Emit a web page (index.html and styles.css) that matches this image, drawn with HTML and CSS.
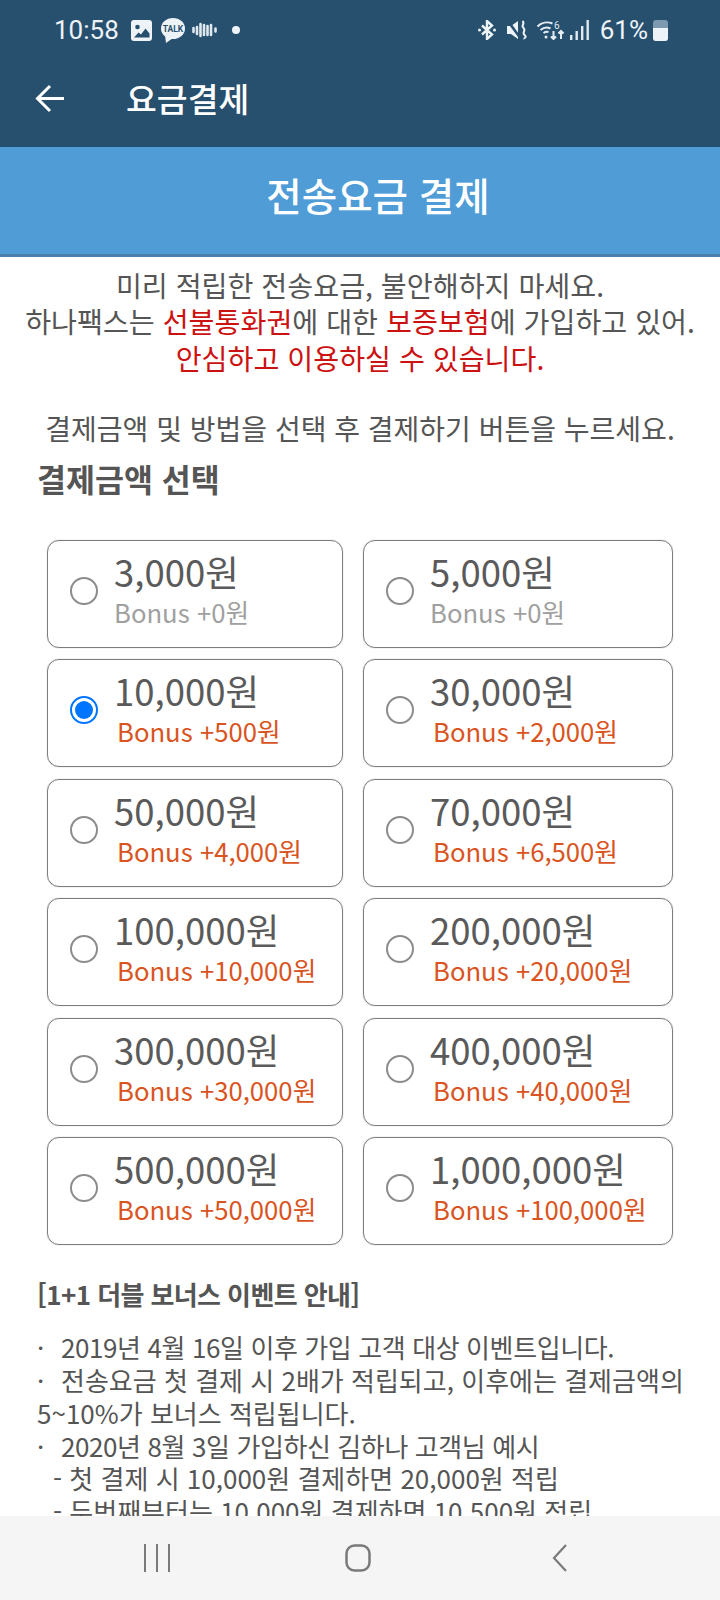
FILE: index.html
```html
<!DOCTYPE html>
<html lang="ko">
<head>
    <meta charset="UTF-8">
    <meta name="viewport" content="width=device-width, initial-scale=1.0">
    <title>요금결제</title>
    <link rel="stylesheet" href="styles.css">
</head>
<body>
    <div class="screen">
        <div class="app-bar">
            <div class="status-bar">
                <div class="status-left">
                    <span class="clock">10:58</span>
                    <svg class="ic-photo" width="21" height="21" viewBox="0 0 21 21"><rect width="21" height="21" rx="3" fill="#eef3f7"/><circle cx="6.500" cy="7" r="2.300" fill="#27506f"/><path d="M3 17.500l4.500-5 2.500 2 4.500-6 4 5v4z" fill="#27506f"/></svg>
                    <svg class="ic-talk" width="24" height="25" viewBox="0 0 24 25"><ellipse cx="12" cy="10.500" rx="12" ry="10.500" fill="#eef3f7"/><path d="M4 17l1 8 7-5z" fill="#eef3f7"/><text x="12" y="14" text-anchor="middle" class="talk-text">TALK</text></svg>
                    <svg class="ic-wave" width="25" height="16" viewBox="0 0 25 16"><g stroke="#dfe8ee" stroke-width="2.600" stroke-linecap="round"><path d="M1.500 6v4M5 5v7M8.500 2v12M12 3v10M15.500 4v9M19 3v10M23.500 6.500v3"/></g></svg>
                    <span class="dot"></span>
                </div>
                <div class="status-right">
                    <svg class="ic-bt" width="18" height="20" viewBox="0 0 18 20" fill="none" stroke="#eef3f7" stroke-width="2.400"><path d="M4 5.500l10 9-5 4.500V1l5 4.500-10 9"/><circle cx="1.500" cy="10" r="1.500" fill="#eef3f7" stroke="none"/><circle cx="16.500" cy="10" r="1.500" fill="#eef3f7" stroke="none"/></svg>
                    <svg class="ic-mute" width="20" height="20" viewBox="0 0 20 20"><path d="M0 6h4l7-5v18l-7-5H0z" fill="#eef3f7"/><path d="M1 1l13 18" stroke="#27506f" stroke-width="2.500"/><path d="M15.500 1c3 3-2 4.500 1 7s-2 4.500 1 7-1 3 0 4" stroke="#eef3f7" stroke-width="2" fill="none"/></svg>
                    <svg class="ic-wifi" width="27" height="20" viewBox="0 0 27 20" fill="none" stroke="#e6edf2" stroke-width="2"><path d="M0.500 6.500c4-4 10-5 15-3M3.500 10c3-2.500 7-3 10-1.500M6.500 13c1.500-1 3-1.500 5-1"/><circle cx="9" cy="17" r="1.500" fill="#e6edf2" stroke="none"/><path d="M16.500 11v8M14 16.500l2.500 2.500 2.500-2.500M24 19v-8M21.500 13.500l2.500-2.500 2.500 2.500"/><text x="17" y="9" class="wifi-six">6</text></svg>
                    <svg class="ic-signal" width="19" height="20" viewBox="0 0 19 20" fill="#dfe8ee"><rect x="0" y="15" width="2.400" height="5"/><rect x="5.500" y="11" width="2.400" height="9"/><rect x="11" y="6" width="2.400" height="14"/><rect x="16.500" y="0" width="2.400" height="20"/></svg>
                    <span class="percent">61%</span>
                    <span class="battery"><span class="battery-fill"></span></span>
                </div>
            </div>
            <div class="toolbar">
                <svg class="back" width="29" height="29" viewBox="0 0 29 29" fill="none" stroke="#fff" stroke-width="3"><path d="M29 14.500H3M15 2L2.500 14.500 15 27"/></svg>
                <h1 class="toolbar-title">요금결제</h1>
            </div>
        </div>

        <div class="banner">전송요금 결제</div>

        <div class="content">
            <div class="notice">
                <p>미리 적립한 전송요금, 불안해하지 마세요.</p>
                <p>하나팩스는 <em>선불통화권</em>에 대한 <em>보증보험</em>에 가입하고 있어.</p>
                <p><em>안심하고 이용하실 수 있습니다.</em></p>
            </div>
            <p class="guide">결제금액 및 방법을 선택 후 결제하기 버튼을 누르세요.</p>
            <h2 class="section-title">결제금액 선택</h2>

            <div class="price-grid">
                <label class="price-card">
                    <span class="radio"></span>
                    <span class="price-text"><span class="amount">3,000원</span><span class="bonus none">Bonus +0원</span></span>
                </label>
                <label class="price-card">
                    <span class="radio"></span>
                    <span class="price-text"><span class="amount">5,000원</span><span class="bonus none">Bonus +0원</span></span>
                </label>
                <label class="price-card">
                    <span class="radio checked"></span>
                    <span class="price-text"><span class="amount">10,000원</span><span class="bonus">Bonus +500원</span></span>
                </label>
                <label class="price-card">
                    <span class="radio"></span>
                    <span class="price-text"><span class="amount">30,000원</span><span class="bonus">Bonus +2,000원</span></span>
                </label>
                <label class="price-card">
                    <span class="radio"></span>
                    <span class="price-text"><span class="amount">50,000원</span><span class="bonus">Bonus +4,000원</span></span>
                </label>
                <label class="price-card">
                    <span class="radio"></span>
                    <span class="price-text"><span class="amount">70,000원</span><span class="bonus">Bonus +6,500원</span></span>
                </label>
                <label class="price-card">
                    <span class="radio"></span>
                    <span class="price-text"><span class="amount">100,000원</span><span class="bonus">Bonus +10,000원</span></span>
                </label>
                <label class="price-card">
                    <span class="radio"></span>
                    <span class="price-text"><span class="amount">200,000원</span><span class="bonus">Bonus +20,000원</span></span>
                </label>
                <label class="price-card">
                    <span class="radio"></span>
                    <span class="price-text"><span class="amount">300,000원</span><span class="bonus">Bonus +30,000원</span></span>
                </label>
                <label class="price-card">
                    <span class="radio"></span>
                    <span class="price-text"><span class="amount">400,000원</span><span class="bonus">Bonus +40,000원</span></span>
                </label>
                <label class="price-card">
                    <span class="radio"></span>
                    <span class="price-text"><span class="amount">500,000원</span><span class="bonus">Bonus +50,000원</span></span>
                </label>
                <label class="price-card">
                    <span class="radio"></span>
                    <span class="price-text"><span class="amount">1,000,000원</span><span class="bonus">Bonus +100,000원</span></span>
                </label>
            </div>

            <h3 class="event-title">[1+1 더블 보너스 이벤트 안내]</h3>
            <div class="event-list">
                <p class="tight"><span class="mark">·</span>2019년 4월 16일 이후 가입 고객 대상 이벤트입니다.</p>
                <p><span class="mark">·</span>전송요금 첫 결제 시 2배가 적립되고, 이후에는 결제금액의<br>5~10%가 보너스 적립됩니다.</p>
                <p class="tight"><span class="mark">·</span>2020년 8월 3일 가입하신 김하나 고객님 예시</p>
                <p class="sub">- 첫 결제 시 10,000원 결제하면 20,000원 적립</p>
                <p class="sub">- 두번째부터는 10,000원 결제하면 10,500원 적립</p>
            </div>
        </div>

        <div class="nav-bar">
            <svg width="26" height="28" viewBox="0 0 26 28" fill="none" stroke="#7a7a7a" stroke-width="2"><path d="M1 0v28M13 0v28M25 0v28"/></svg>
            <svg width="26" height="28" viewBox="0 0 26 28" fill="none" stroke="#7a7a7a" stroke-width="2.500"><rect x="1.500" y="1.500" width="23" height="25" rx="8"/></svg>
            <svg class="nav-back" width="15" height="28" viewBox="0 0 15 28" fill="none" stroke="#7a7a7a" stroke-width="2.200"><path d="M14 1L2 14l12 13"/></svg>
        </div>
    </div>
</body>
</html>
```

FILE: styles.css
```css
* {
    box-sizing: border-box;
}

body {
    margin: 0;
    font-family: "Noto Sans CJK KR", "Noto Sans", sans-serif;
    background-color: #fff;
    color: #555;
}

p, h1, h2, h3 {
    margin: 0;
}

.screen {
    width: 720px;
    height: 1600px;
    display: flex;
    flex-direction: column;
    overflow: hidden;
}

.app-bar {
    height: 147px;
    background-color: #27506f;
    color: #fff;
    flex-shrink: 0;
}

.status-bar {
    height: 60px;
    padding: 0 52px 0 54px;
    display: flex;
    justify-content: space-between;
    align-items: center;
}

.status-left, .status-right {
    display: flex;
    align-items: center;
}

.clock, .percent {
    font-family: Roboto, sans-serif;
    font-size: 26px;
    color: #eef3f7;
}

.ic-photo { margin-left: 12px; }
.ic-talk { margin-left: 9px; }
.ic-wave { margin-left: 7px; }

.ic-mute { margin-left: 11px; }
.ic-wifi { margin-left: 10px; }
.ic-signal { margin-left: 6px; }

.percent {
    margin: 0 5px 0 11px;
}

.talk-text {
    font-family: Roboto, sans-serif;
    font-size: 8.500px;
    font-weight: 700;
    fill: #27506f;
}

.wifi-six {
    font-family: Roboto, sans-serif;
    font-size: 10px;
    fill: #dfe8ee;
    stroke: none;
}

.dot {
    width: 8px;
    height: 8px;
    border-radius: 50%;
    background-color: #eef3f7;
    margin-left: 15px;
}

.battery {
    width: 15px;
    height: 21px;
    border-radius: 3px;
    background-color: #7d9ab0;
    display: flex;
    align-items: flex-end;
    overflow: hidden;
}

.battery-fill {
    width: 100%;
    height: 13px;
    background-color: #eef3f7;
}

.toolbar {
    height: 76px;
    display: flex;
    align-items: center;
    padding-left: 35px;
}

.toolbar-title {
    margin-left: 62px;
    font-size: 33.500px;
    font-weight: 500;
    line-height: 1;
}

.banner {
    height: 110px;
    flex-shrink: 0;
    background-color: #4f9cd7;
    border-bottom: 3px solid #4a80ab;
    color: #fff;
    font-size: 38.500px;
    font-weight: 500;
    display: flex;
    align-items: center;
    justify-content: center;
    padding: 0 0 14px 36px;
}

.content {
    flex: 1;
    min-height: 0;
    overflow: hidden;
}

.notice {
    padding-top: 10px;
    text-align: center;
    font-size: 28.200px;
    line-height: 36.300px;
}

.notice em {
    font-style: normal;
    color: #cc1111;
}

.guide {
    margin-top: 34px;
    text-align: center;
    font-size: 28px;
    line-height: 36px;
}

.section-title {
    margin: 11px 0 0 37px;
    font-size: 31.500px;
    font-weight: 700;
    line-height: 42px;
}

.price-grid {
    margin: 41px 0 0 47px;
    display: grid;
    grid-template-columns: 296px 310px;
    column-gap: 20px;
    row-gap: 11.500px;
}

.price-card {
    height: 108px;
    border: 1px solid #7d7d7d;
    border-radius: 12px;
    box-shadow: 0 0 1px #999;
    display: flex;
    align-items: center;
    padding: 0 0 6px 22px;
}

.radio {
    width: 28px;
    height: 28px;
    border: 2px solid #8c8c8c;
    border-radius: 50%;
    flex-shrink: 0;
}

.radio.checked {
    border: 2px solid #0075ff;
    padding: 3px;
    background-color: #0075ff;
    background-clip: content-box;
}

.price-text {
    margin: -4px 0 0 16px;
    display: flex;
    flex-direction: column;
}

.amount {
    font-size: 36.500px;
    line-height: 46px;
    font-weight: 400;
    color: #5a5a5a;
}

.bonus {
    font-size: 25.700px;
    line-height: 34px;
    color: #d9541e;
    padding-left: 3px;
}

.bonus.none {
    color: #a0a0a0;
    padding-left: 0;
}

.event-title {
    margin: 31px 0 0 37px;
    font-size: 26px;
    font-weight: 700;
    line-height: 36px;
    letter-spacing: -0.6px;
}

.event-list {
    margin: 19px 0 0 37px;
    font-size: 26px;
    line-height: 32.700px;
}

.event-list .tight {
    letter-spacing: -0.4px;
}

.event-list .mark {
    display: inline-block;
    width: 24px;
}

.event-list .sub {
    padding-left: 16px;
}

.nav-bar {
    height: 84px;
    flex-shrink: 0;
    background-color: #f5f5f5;
    display: flex;
    align-items: center;
    gap: 175px;
    padding-left: 144px;
}

.nav-back {
    margin-left: 6px;
}
```
